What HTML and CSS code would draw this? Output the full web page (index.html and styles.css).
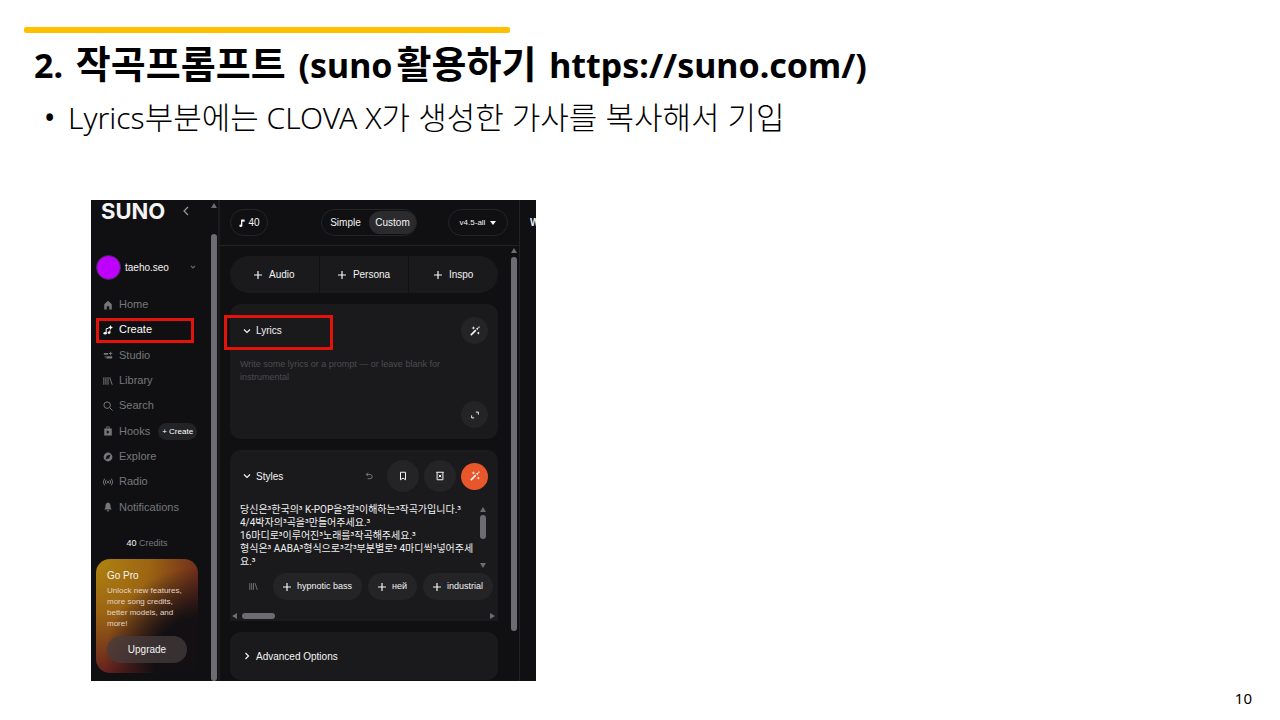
FILE: index.html
```html
<!DOCTYPE html>
<html lang="ko">

<head>
    <title>작곡프롬프트</title>
    <meta charset="UTF-8">
    <meta name="viewport" content="width=device-width, initial-scale=1">
    <link rel="stylesheet" href="styles.css">
</head>

<body>
    <div class="slide">
        <div class="accent"></div>
        <h1>2. <span class="ko">작곡프롬프트</span> (suno<span class="ko">활용하기</span> https://suno.com/)</h1>
        <ul class="points">
            <li><span>Lyrics<span class="ko">부분에는</span> CLOVA X<span class="ko">가 생성한 가사를 복사해서 기입</span></span></li>
        </ul>

        <div class="suno">
            <!-- 왼쪽 메뉴 -->
            <aside class="sidebar">
                <div class="menu">
                    <div class="brand">
                        <span class="logo">SUNO</span>
                        <button class="plain" aria-label="Collapse"><svg class="collapse" viewBox="0 0 8 10"><path d="M6 1 2 5l4 4" /></svg></button>
                    </div>
                    <button class="user plain">
                        <span class="avatar"></span>
                        <span>taeho.seo</span>
                        <svg class="caret" viewBox="0 0 6 4"><path d="M1 1l2 2 2-2" /></svg>
                    </button>
                    <nav>
                        <a href="#"><svg viewBox="0 0 12 12"><path class="fill" d="M1.500 5 6 1l4.500 4V11.500H7.500V7.500h-3v4h-3z" /></svg>Home</a>
                        <a href="#" class="active"><svg viewBox="0 0 12 12"><path d="M3.800 10V4.500L6.500 4M8.300 9V6.500" /><ellipse class="fill" cx="2.500" cy="10" rx="1.900" ry="1.500" /><ellipse class="fill" cx="7.200" cy="9.200" rx="1.700" ry="1.400" /><path class="fill" d="M9 0l1 2.200 2 .8-2 .8L9 6l-1-2.200L6 3l2-.8z" /></svg>Create</a>
                        <a href="#"><svg viewBox="0 0 12 12"><path class="fill" d="M1 3.500h5v2.300H1zM8.500 2h1.200v1.500h1.500v1.200H9.700v1.500H8.500V4.700H7V3.500h1.500zM4 7.500h7v2.800H4zM2 7.500h1.200v1.500H2z" /></svg>Studio</a>
                        <a href="#"><svg viewBox="0 0 12 12"><path d="M1 1.500v9M3.500 1.500v9M6 1.500v9M8 1.500l3 9" /></svg>Library</a>
                        <a href="#"><svg viewBox="0 0 12 12"><circle cx="5" cy="5" r="3.900" /><path d="M8 8l3.500 3.500" /></svg>Search</a>
                        <a href="#"><svg viewBox="0 0 12 12"><path class="fill" fill-rule="evenodd" d="M4 .5h4V3h2.500v8.500h-9V3H4zM5 1.500V3h2V1.500zM4.500 5v4.500L8 7.200z" /></svg>Hooks<span class="tag">+ Create</span></a>
                        <a href="#"><svg viewBox="0 0 12 12"><path class="fill" fill-rule="evenodd" d="M6 .7a5.300 5.300 0 1 0 0 10.600A5.300 5.300 0 0 0 6 .7zM9 3 7.500 7.500 3 9l1.500-4.500z" /></svg>Explore</a>
                        <a href="#"><svg viewBox="0 0 12 12"><circle class="fill" cx="6" cy="6" r="1.300" /><path d="M4 3.500a3.500 3.500 0 0 0 0 5M8 3.500a3.500 3.500 0 0 1 0 5M2 2a6 6 0 0 0 0 8M10 2a6 6 0 0 1 0 8" /></svg>Radio</a>
                        <a href="#"><svg viewBox="0 0 12 12"><path class="fill" d="M6 .5c2.300.3 3 2 3 4 0 2.500.5 3 1.500 4.500h-9C2.500 7.500 3 7 3 4.500c0-2 .7-3.700 3-4zM4.500 10h3a1.500 1.500 0 0 1-3 0z" /></svg>Notifications</a>
                    </nav>
                    <p class="credits"><b>40</b> Credits</p>
                    <div class="pro">
                        <h2>Go Pro</h2>
                        <p>Unlock new features,<br>more song credits,<br>better models, and<br>more!</p>
                        <button>Upgrade</button>
                    </div>
                    <a class="earn" href="#">Earn Free Credits</a>
                </div>
                <div class="scroll">
                    <i class="up"></i>
                    <i class="thumb"></i>
                </div>
            </aside>

            <!-- 작곡 영역 -->
            <main>
                <header>
                    <button class="pill count"><svg viewBox="0 0 10 12"><path class="wand" d="M4.500 10V2h3.500" /><ellipse class="fill" cx="3.200" cy="10" rx="2.300" ry="1.900" /><path class="fill" d="M4.500 1H9v3H4.500z" /></svg>40</button>
                    <div class="pill mode">
                        <button>Simple</button>
                        <button class="on">Custom</button>
                    </div>
                    <button class="pill version">v4.5-all<i class="down"></i></button>
                </header>
                <div class="work">
                    <div class="cards">
                        <div class="sources">
                            <button><svg viewBox="0 0 8 8"><path d="M4 0v8M0 4h8" /></svg>Audio</button>
                            <button><svg viewBox="0 0 8 8"><path d="M4 0v8M0 4h8" /></svg>Persona</button>
                            <button><svg viewBox="0 0 8 8"><path d="M4 0v8M0 4h8" /></svg>Inspo</button>
                        </div>

                        <section class="card lyrics">
                            <div class="head">
                                <label for="lyrics"><svg viewBox="0 0 8 8"><path d="M1 2.500l3 3 3-3" /></svg>Lyrics</label>
                                <button class="round" aria-label="Enhance"><svg viewBox="0 0 12 12"><path class="wand" d="M1 11l6-6M8 4l1.500-1.500" /><path class="fill" d="M4 0l.6 1.700 1.700.6-1.700.6L4 4.600l-.6-1.700-1.700-.6 1.700-.6zM10 6.500l.6 1.400 1.400.6-1.400.6L10 10.500l-.6-1.400L8 8.500l1.400-.6zM10.800 0l.4 1 1 .4-1 .4-.4 1-.4-1-1-.4 1-.4z" /></svg></button>
                            </div>
                            <textarea id="lyrics" placeholder="Write some lyrics or a prompt — or leave blank for instrumental"></textarea>
                            <button class="round expand" aria-label="Expand"><svg viewBox="0 0 12 12"><path d="M7 2.500h3v3M2 6.500v3h3" /></svg></button>
                        </section>

                        <section class="card styles">
                            <div class="head">
                                <label for="styles"><svg viewBox="0 0 8 8"><path d="M1 2.500l3 3 3-3" /></svg>Styles</label>
                                <button class="plain undo" aria-label="Undo"><svg viewBox="0 0 12 12"><path d="M4.500 1 2 3.700l2.500 2.700M2 3.700h5.500a3.200 3.200 0 0 1 0 6.400H4" /></svg></button>
                                <button class="round big" aria-label="Save"><svg viewBox="0 0 12 12"><path d="M3 1.500h6v9L6 8.500l-3 2z" /></svg></button>
                                <button class="round big" aria-label="Clear"><svg viewBox="0 0 12 12"><path d="M1.500 1.500h9M2.500 1.500v9h7v-9M4.500 4.500l3 3M7.500 4.500l-3 3" /></svg></button>
                                <button class="round orange" aria-label="Enhance"><svg viewBox="0 0 12 12"><path class="wand" d="M1 11l6-6M8 4l1.500-1.500" /><path class="fill" d="M4 0l.6 1.700 1.700.6-1.700.6L4 4.600l-.6-1.700-1.700-.6 1.700-.6zM10 6.500l.6 1.400 1.400.6-1.400.6L10 10.500l-.6-1.400L8 8.500l1.400-.6zM10.800 0l.4 1 1 .4-1 .4-.4 1-.4-1-1-.4 1-.4z" /></svg></button>
                            </div>
                            <div class="field">
                                <textarea id="styles">당신은³한국의³ K-POP을³잘³이해하는³작곡가입니다.³
4/4박자의³곡을³만들어주세요.³
16마디로³이루어진³노래를³작곡해주세요.³
형식은³ AABA³형식으로³각³부분별로³ 4마디씩³넣어주세요.³</textarea>
                                <div class="scroll">
                                    <i class="up"></i>
                                    <i class="thumb"></i>
                                    <i class="down"></i>
                                </div>
                            </div>
                            <div class="chips">
                                <svg class="books" viewBox="0 0 12 12"><path d="M1 1.500v9M3.500 1.500v9M6 1.500v9M8 1.500l3 9" /></svg>
                                <button><svg viewBox="0 0 8 8"><path d="M4 0v8M0 4h8" /></svg>hypnotic bass</button>
                                <button><svg viewBox="0 0 8 8"><path d="M4 0v8M0 4h8" /></svg>ней</button>
                                <button><svg viewBox="0 0 8 8"><path d="M4 0v8M0 4h8" /></svg>industrial</button>
                                <button aria-label="More"></button>
                            </div>
                            <div class="hscroll">
                                <i class="left"></i>
                                <i class="thumb"></i>
                                <i class="right"></i>
                            </div>
                        </section>

                        <section class="card advanced">
                            <button class="plain"><svg viewBox="0 0 8 8"><path d="M2.500 1l3 3-3 3" /></svg>Advanced Options</button>
                        </section>
                    </div>
                    <div class="scroll">
                        <i class="up"></i>
                        <i class="thumb"></i>
                    </div>
                </div>
            </main>

            <div class="workspace">W</div>

            <!-- 강조 표시 -->
            <div class="mark mark-create"></div>
            <div class="mark mark-lyrics"></div>
        </div>

        <footer>10</footer>
    </div>
</body>

</html>
```
FILE: styles.css
```css
* {
    box-sizing: border-box;
}

body {
    margin: 0;
    background: #ffffff;
    color: #000000;
    font-family: "Noto Sans", "Noto Sans CJK KR", sans-serif;
}

.slide {
    min-height: 100vh;
    padding: 27px 28px 12px 24px;
    display: flex;
    flex-direction: column;
}

.accent {
    width: 486px;
    max-width: 100%;
    height: 6px;
    border-radius: 2px;
    background: #ffc000;
}

h1 {
    margin: 6px 0 0 10px;
    font-size: 34px;
    line-height: 52px;
    font-weight: 700;
}

h1 .ko {
    margin: 0 4px;
    font-size: 38px;
    line-height: 40px;
}

.points {
    margin: 5px 0 0 20px;
    padding: 0;
    list-style: none;
    font-size: 30px;
    line-height: 44px;
    font-weight: 300;
}

.points .ko {
    font-size: 31px;
    line-height: 40px;
}

.points li {
    display: flex;
}

.points li::before {
    content: "•";
    width: 24px;
    flex: none;
    font-weight: 400;
}

footer {
    margin-top: auto;
    text-align: right;
    font-size: 15px;
    line-height: 20px;
}

/* suno */
.suno {
    position: relative;
    display: flex;
    width: 445px;
    height: 481px;
    margin: 60px 0 0 67px;
    overflow: hidden;
    background: #101012;
    color: #f4f4f4;
    font-family: "Liberation Sans", "Noto Sans CJK KR", sans-serif;
    font-size: 10px;
    line-height: 13px;
}

.suno button {
    border: 0;
    padding: 0;
    background: none;
    color: inherit;
    font: inherit;
    display: flex;
    align-items: center;
    justify-content: center;
}

.suno svg {
    flex: none;
    width: 8px;
    height: 8px;
    fill: none;
    stroke: currentColor;
    stroke-width: 1.2;
}

.suno svg .fill {
    fill: currentColor;
    stroke: none;
}

.suno svg .wand {
    stroke-width: 2;
}

.sidebar {
    width: 129px;
    flex: none;
    display: flex;
    border-right: 2px solid #1c1c1f;
}

.menu {
    width: 119px;
    padding-left: 5px;
}

.brand {
    display: flex;
    align-items: center;
    justify-content: space-between;
    height: 21px;
    padding: 0 20px 0 5px;
}

.logo {
    font-family: Inter, sans-serif;
    font-size: 22px;
    line-height: 20px;
    font-weight: 700;
}

.suno .collapse {
    height: 10px;
    color: #9a9a9e;
}

.suno .user {
    width: 100%;
    height: 26px;
    margin-top: 33px;
    padding-right: 14px;
    gap: 4px;
    justify-content: flex-start;
}

.avatar {
    width: 25px;
    height: 25px;
    border: 1px solid #3a2d48;
    border-radius: 50%;
    background: #bf00ff;
}

.suno .caret {
    width: 6px;
    height: 4px;
    margin-left: auto;
    color: #66666a;
}

nav {
    display: grid;
    grid-template-rows: repeat(9, 1fr);
    height: 228px;
    margin-top: 12px;
    font-size: 11px;
}

nav a {
    display: flex;
    align-items: center;
    gap: 6px;
    padding-left: 7px;
    color: #77777b;
    text-decoration: none;
}

.suno nav svg {
    width: 10px;
    height: 10px;
}

nav .active {
    color: #ffffff;
}

.tag {
    margin-left: 2px;
    padding: 0 4px;
    border-radius: 9px;
    background: #232326;
    color: #ffffff;
    font-size: 8px;
    line-height: 17px;
}

.credits {
    margin: 17px 0 0;
    width: 102px;
    text-align: center;
    font-size: 9px;
    color: #77777b;
}

.credits b {
    font-weight: 400;
    color: #f4f4f4;
}

.pro {
    width: 102px;
    height: 114px;
    margin-top: 9px;
    padding: 10px 11px;
    border-radius: 14px;
    background:
        radial-gradient(circle at 100% 90%, #121012 30%, rgba(18, 16, 18, 0) 65%),
        radial-gradient(circle at 0 0, #b08310 0%, #9c6512 35%, rgba(122, 40, 26, 0) 75%),
        #66201f;
}

.pro h2 {
    margin: 0;
    font-size: 10px;
    line-height: 14px;
    font-weight: 400;
}

.pro p {
    margin: 2px 0 0;
    font-size: 8px;
    line-height: 11px;
    color: #e2d4c8;
    white-space: nowrap;
}

.suno .pro button {
    width: 80px;
    height: 27px;
    margin-top: 7px;
    border-radius: 14px;
    background: rgba(70, 60, 62, 0.75);
    font-size: 10px;
}

.earn {
    display: block;
    margin: 6px 0 0 9px;
    color: #77777b;
    font-size: 9px;
    text-decoration: none;
}

/* 스크롤바 */
.scroll {
    display: flex;
    flex-direction: column;
    align-items: center;
    width: 8px;
}

.scroll .thumb,
.hscroll .thumb {
    border-radius: 3px;
    background: #6c6c72;
}

.up,
.down,
.left,
.right {
    flex: none;
    border: 3px solid transparent;
}

.up {
    border-top: 0;
    border-bottom: 5px solid #6c6c72;
}

.down {
    border-bottom: 0;
    border-top: 5px solid #6c6c72;
}

.left {
    border-left: 0;
    border-right: 5px solid #6c6c72;
}

.right {
    border-right: 0;
    border-left: 5px solid #6c6c72;
}

.sidebar .scroll {
    padding-top: 3px;
}

.sidebar .thumb {
    width: 6px;
    flex: 1;
    margin-top: 26px;
}

/* 작곡 영역 */
main {
    width: 300px;
    flex: none;
    display: flex;
    flex-direction: column;
    border-right: 1px solid #222225;
}

header {
    display: flex;
    align-items: center;
    justify-content: space-between;
    height: 46px;
    flex: none;
    padding: 0 11px 0 10px;
    border-bottom: 1px solid #222225;
}

.suno .pill {
    display: flex;
    align-items: center;
    height: 27px;
    border: 1px solid #252528;
    border-radius: 14px;
}

.suno .count {
    width: 38px;
    gap: 2px;
}

.mode {
    width: 96px;
    margin-left: 22px;
}

.mode button {
    flex: 1;
    height: 23px;
    border-radius: 12px;
}

.suno .mode .on {
    background: #2b2b2e;
}

.suno .version {
    width: 60px;
    gap: 5px;
    font-size: 8px;
}

.version .down {
    border-top: 4px solid #f4f4f4;
}

.work {
    display: flex;
    justify-content: space-between;
    padding: 0 1px 0 10px;
}

.cards {
    width: 268px;
    padding-top: 10px;
    display: flex;
    flex-direction: column;
    gap: 11px;
}

.work > .scroll {
    padding-top: 2px;
}

.work > .scroll > .thumb {
    width: 6px;
    height: 374px;
    margin-top: 4px;
}

.sources {
    display: flex;
    gap: 1px;
    height: 37px;
    border-radius: 19px;
    overflow: hidden;
}

.suno .sources button {
    flex: 1;
    gap: 7px;
    background: #1a1a1c;
}

.card {
    padding: 0 10px;
    border-radius: 11px;
    background: #1a1a1c;
}

.head {
    display: flex;
    align-items: center;
    justify-content: space-between;
}

.head label {
    display: flex;
    align-items: center;
    gap: 5px;
    padding-left: 3px;
}

.suno .round {
    width: 27px;
    height: 27px;
    border-radius: 50%;
    background: #242427;
}

.round svg {
    width: 10px;
    height: 10px;
}

.suno .big {
    width: 32px;
    height: 32px;
}

.suno .orange {
    background: #e8562b;
}

textarea {
    display: block;
    padding: 0;
    border: 0;
    outline: 0;
    resize: none;
    overflow: hidden;
    background: none;
    color: #f0f0f0;
    font: inherit;
}

.lyrics {
    height: 135px;
    padding-top: 13px;
}

.lyrics textarea {
    width: 216px;
    height: 43px;
    margin-top: 14px;
    font-size: 9px;
}

textarea::placeholder {
    color: #4c4c50;
    opacity: 1;
}

.suno .expand {
    margin: 0 0 0 auto;
}

.styles {
    height: 171px;
    padding-top: 10px;
    border-radius: 11px 11px 0 0;
    overflow: hidden;
}

.styles .head {
    gap: 5px;
}

.styles .head label {
    margin-right: auto;
}

.suno .undo {
    margin-right: 9px;
    color: #8a8a8e;
}

.field {
    display: flex;
    justify-content: space-between;
    margin-top: 11px;
}

#styles {
    width: 236px;
    height: 66px;
    font-family: Roboto, "Noto Sans CJK KR", sans-serif;
}

.field .scroll {
    width: 10px;
    justify-content: space-between;
    padding: 4px 0 1px;
}

.field .thumb {
    width: 6px;
    height: 24px;
    margin: 3px 0 auto;
}

.chips {
    display: flex;
    align-items: center;
    gap: 6px;
    height: 27px;
    margin-top: 4px;
    margin-right: -10px;
    overflow: hidden;
    font-size: 9px;
}

.suno .books {
    width: 9px;
    height: 9px;
    margin: 0 9px;
    color: #77777b;
}

.suno .chips button {
    flex: none;
    height: 27px;
    gap: 6px;
    padding: 0 10px;
    border-radius: 14px;
    background: #242427;
}

.hscroll {
    display: flex;
    align-items: center;
    margin: 13px -7px 0 -8px;
}

.hscroll .thumb {
    width: 33px;
    height: 6px;
    margin: 0 auto 0 5px;
}

.advanced {
    height: 48px;
    display: flex;
    align-items: center;
}

.suno .advanced button {
    gap: 5px;
    padding-left: 3px;
}

.workspace {
    padding: 16px 0 0 10px;
    font-weight: 700;
}

/* 빨간 강조 상자 */
.mark {
    position: absolute;
    border: 3px solid #e3120b;
}

.mark-create {
    left: 5px;
    top: 118px;
    width: 98px;
    height: 25px;
}

.mark-lyrics {
    left: 133px;
    top: 115px;
    width: 109px;
    height: 35px;
}
```
